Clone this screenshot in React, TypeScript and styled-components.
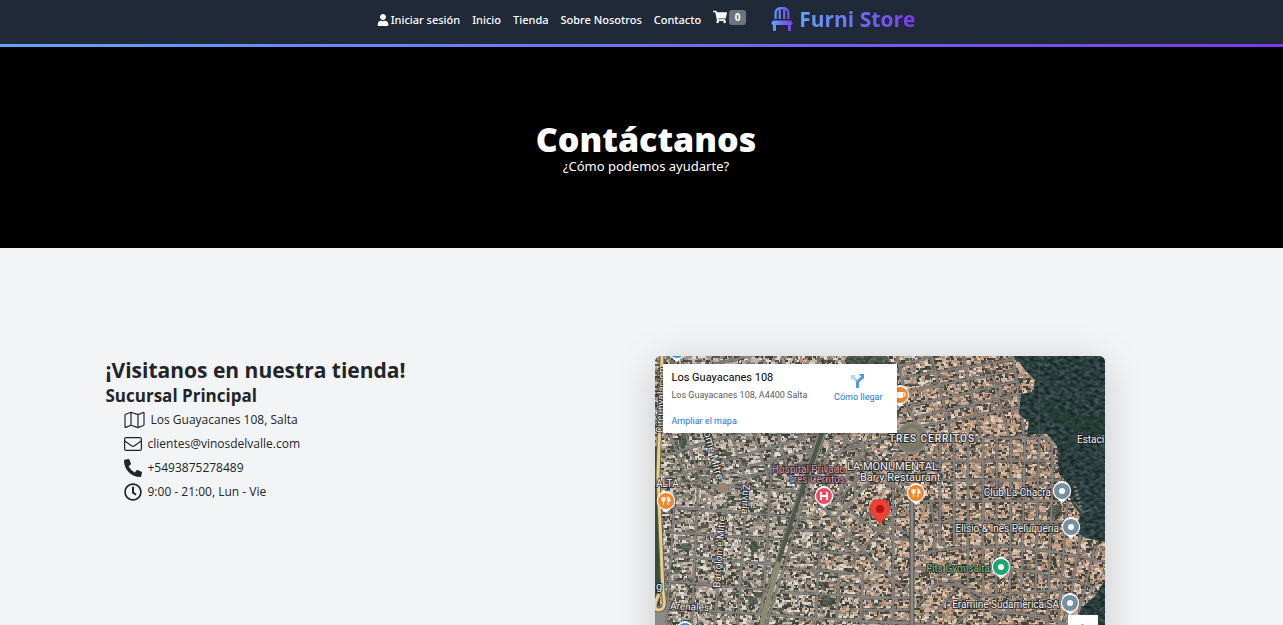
import React from "react";
import styled, { createGlobalStyle, css } from "styled-components";
import { FaUser, FaShoppingCart, FaChair, FaPhoneAlt, FaRegClock } from "react-icons/fa";

const GlobalStyle = createGlobalStyle`
  *, *::before, *::after { box-sizing: border-box; }
  body {
    margin: 0;
    background: #f3f4f6;
    color: #212529;
    font-family: "Open Sans", "Noto Sans", sans-serif;
    font-size: 12px;
    line-height: 20px;
  }
  h1, h2, h3, p, ul { margin: 0; padding: 0; }
  ul { list-style: none; }
  a { color: inherit; text-decoration: none; }
`;

const Page = styled.div`
  min-height: 100vh;
  overflow: hidden;
`;

const Header = styled.header`
  background: #1f2937;
  &::after {
    content: "";
    display: block;
    height: 3px;
    background: linear-gradient(90deg, #60a5fa, #7c3aed);
  }
`;

const Nav = styled.nav`
  display: flex;
  justify-content: center;
  align-items: center;
  height: 44px;
  padding: 0 0 6px 9px;
  color: #fff;
`;

const NavList = styled.ul`
  display: flex;
  align-items: center;
  gap: 12px;
`;

const NavLink = styled.a`
  display: flex;
  align-items: center;
  gap: 2px;
  padding-top: 2px;
  font-family: "Noto Sans", sans-serif;
  font-size: 11px;
  font-weight: 500;
  white-space: nowrap;
`;

const CartLink = styled(NavLink)`
  padding: 0 0 4px;
`;

const CartBadge = styled.span`
  min-width: 17px;
  height: 15px;
  border-radius: 3px;
  background: #6c757d;
  font-size: 10px;
  font-weight: 700;
  line-height: 15px;
  text-align: center;
`;

const Brand = styled.a`
  display: flex;
  align-items: center;
  gap: 5px;
  margin-left: 24px;
  font-size: 21px;
  font-weight: 700;
  line-height: 30px;
  white-space: nowrap;
  svg path { fill: url(#brandGradient); }
`;

const BrandName = styled.span`
  background: linear-gradient(90deg, #60a5fa, #7c3aed);
  background-clip: text;
  -webkit-background-clip: text;
  color: transparent;
`;

const Defs = styled.svg`
  position: absolute;
  width: 0;
  height: 0;
`;

const Hero = styled.section`
  display: flex;
  flex-direction: column;
  align-items: center;
  justify-content: center;
  min-height: 201px;
  padding: 0 0 0 9px;
  background: #000;
  color: #fff;
`;

const HeroTitle = styled.h1`
  font-size: 34px;
  font-weight: 800;
  line-height: 36px;
`;

const HeroText = styled.p`
  font-family: "Noto Sans", sans-serif;
  font-size: 13px;
  line-height: 18px;
`;

const Contact = styled.main`
  display: grid;
  grid-template-columns: 1fr 1fr;
  gap: 26px;
  max-width: 1072px;
  margin: 0 auto;
  padding: 108px 0 100px;
`;

const StoreTitle = styled.h2`
  font-size: 21px;
  font-weight: 700;
  line-height: 28px;
`;

const BranchTitle = styled.h3`
  font-size: 17px;
  font-weight: 700;
  line-height: 24px;
`;

const ContactList = styled.ul`
  padding-left: 18px;
`;

const ContactItem = styled.li`
  display: flex;
  align-items: center;
  gap: 6px;
  height: 24px;
  font-size: 12px;
`;

const MapFrame = styled.section`
  position: relative;
  width: 450px;
  max-width: 100%;
  height: 320px;
  overflow: hidden;
  border-radius: 6px;
`;

const MapShadow = styled.div`
  justify-self: start;
  border-radius: 6px;
  box-shadow: 0 8px 40px rgba(0, 0, 0, 0.18);
`;

const InfoCard = styled.div`
  position: absolute;
  top: 8px;
  left: 8px;
  display: flex;
  justify-content: space-between;
  width: 234px;
  height: 69px;
  padding: 5px 14px 0 9px;
  background: #fff;
  box-shadow: 0 1px 3px rgba(0, 0, 0, 0.3);
  color: #5b5b5b;
  font-family: Roboto, sans-serif;
  font-size: 9px;
  line-height: 18px;
`;

const PlaceName = styled.div`
  color: #000;
  font-size: 11px;
  line-height: 17px;
`;

const MapLink = styled.a<{ $spaced?: boolean }>`
  display: block;
  color: #1a73e8;
  ${(p) => p.$spaced && css`margin-top: 8px;`}
`;

const Directions = styled(MapLink)`
  display: flex;
  flex-direction: column;
  align-items: center;
  padding-top: 4px;
  line-height: 16px;
  height: 36px;
`;

const ZoomControl = styled.button`
  position: absolute;
  top: 259px;
  right: 7px;
  width: 30px;
  height: 30px;
  padding: 0;
  border: 0;
  background: #fff;
  color: #666;
  font: 700 20px/30px Roboto, sans-serif;
`;

const MapLabel = styled.text<{ $size?: number; $tone?: string; $end?: boolean }>`
  font-family: Roboto, sans-serif;
  font-size: ${(p) => p.$size ?? 11}px;
  text-anchor: ${(p) => (p.$end ? "end" : "start")};
  fill: ${(p) => p.$tone ?? "#f1f1f1"};
  stroke: rgba(25, 25, 25, 0.75);
  stroke-width: 2px;
  stroke-linejoin: round;
  paint-order: stroke;
`;

const DistrictLabel = styled(MapLabel)`
  font-weight: 500;
  letter-spacing: 1px;
`;

/* Rooftops and yards: runs of small cells, one path for each colour. */
const W = 450;
const H = 320;
const COOL = ["#c4c0b6", "#545a4e", "#9a9388", "#ece8df", "#3c4339", "#b09b88", "#7b756c", "#cfc3b3"];
const WARM = ["#cfab8f", "#525046", "#a58b78", "#ead9c6", "#3b3d35", "#bd9375", "#80756a", "#d8bba0"];

function rooftops() {
  let seed = 90211;
  const rnd = () => {
    seed = (seed * 1664525 + 1013904223) >>> 0;
    return seed / 4294967296;
  };
  const layers: Record<string, string[]> = {};
  for (let y = 0; y < H; y += 2) {
    let x = 0;
    while (x < W) {
      const w = 1 + Math.floor(rnd() * 4);
      const warm = rnd() < (x - 130 + y * 0.1) / 200;
      const fill = (warm ? WARM : COOL)[Math.floor(rnd() * 8)];
      const h = rnd() < 0.3 ? 3 : 2;
      (layers[fill] ??= []).push(`M${x} ${y}h${w}v${h}h-${w}z`);
      x += w;
    }
  }
  return Object.entries(layers).map(([fill, d]) => ({ fill, d: d.join("") }));
}
const ROOFS = rooftops();

const STREETS = [
  // west grid
  "M20 136L12 262 10 320", "M43 132L37 262 34 320", "M70 146L60 262 57 320", "M93 120L83 262 80 320", "M118 90L107 262 104 320",
  "M8 125L146 136", "M10 151L144 161", "M10 176L134 184", "M10 199L126 209", "M10 225L117 234", "M8 252L320 272", "M8 280L108 286",
  // north-west grid
  "M10 99L86 77", "M10 122L165 77", "M40 125L162 92", "M80 124L158 105", "M10 66L32 124", "M28 70L46 126", "M52 74L70 124", "M75 74L90 122", "M98 74L114 124", "M122 74L134 120", "M146 74L154 100",
  "M10 20L180 -20", "M180 78L162 126", "M196 70L172 132", "M220 70L178 150", "M178 98L245 78", "M170 120L215 112",
  // avenue edges by the railway
  "M172 70L148 145 128 215 104 290", "M164 76L140 150 118 216 102 262",
  // curved centre
  "M150 132Q185 168 226 214L256 238", "M166 126Q205 170 240 182L257 184", "M182 72Q218 120 257 140",
  "M200 82Q224 110 250 118", "M160 150L176 150 206 120", "M176 166L222 118", "M190 182L222 150", "M198 202L236 166", "M222 210L240 190",
  "M138 174L168 174 205 202", "M134 192L196 198", "M130 212L208 218", "M126 236L234 242", "M166 174L160 272", "M184 216L180 290", "M208 216L204 290", "M144 150L142 172", "M200 100V140", "M146 162H166",
  // park and boulevard
  "M210 60L240 76", "M274 82L392 82Q398 84 397 96V126", "M268 96L284 112 262 118 246 130", "M244 96L225 114",
  // north-east grid
  "M242 0L252 50 262 70", "M277 0L296 80", "M308 0L326 80", "M336 15L354 80", "M358 0L369 80",
  "M245 10L275 1", "M246 22L360 3", "M248 36L362 14", "M255 50L364 25", "M262 61L364 38", "M269 70L365 51",
  // east grid
  "M262 105H400", "M262 124H404", "M255 145H412", "M277 166H420", "M262 198L300 192 350 190Q400 194 450 206", "M232 166L257 180",
  "M285 82V190", "M299 82V190", "M313 82V230", "M328 82V240", "M342 82L341 245", "M356 82L355 250", "M370 82L366 256", "M384 82L380 262", "M398 110L392 275",
  "M412 145L402 285", "M426 176L412 265", "M440 190L424 256", "M238 118V320", "M342 212Q400 216 440 232",
  // south-east
  "M262 212L280 214 326 240 400 234 428 246", "M262 250L282 228 302 228 340 256 390 260", "M270 270L304 228", "M290 280L326 244", "M300 300L352 256", "M350 254L420 270", "M334 270H420", "M240 216L256 216",
  "M206 242H256", "M206 254H256", "M206 266H256", "M276 145L280 182 278 198",
];

const FOREST = [
  "M360 0H450V186L430 182 422 176 425 158 416 146 414 128 404 118 402 90 392 78 372 78 374 66 364 58 366 38 378 36 380 24 370 14Z",
  "M450 224L440 240 426 252 418 290 410 320H450Z",
];

type PinProps = { x: number; y: number; color: string; children?: React.ReactNode };

const Pin = ({ x, y, color, children }: PinProps) => (
  <g transform={`translate(${x} ${y})`}>
    <path d="M0-10A10 10 0 0 1 7 6Q3 9 0 12Q-3 9-7 6A10 10 0 0 1 0-10Z" fill="#fff" />
    <circle r="8" fill={color} />
    {children ?? <circle r="3" fill="#fff" />}
  </g>
);

const Fork = () => (
  <g stroke="#fff" fill="none" strokeWidth="1.200">
    <path d="M-4-4V-1Q-4 0-2.500 0T-1-1V-4M-2.500-4V4" />
    <path d="M2 4V-4Q4-3 4 0H2" fill="#fff" />
  </g>
);

const SatelliteMap = () => (
  <svg width={W} height={H} viewBox={`0 0 ${W} ${H}`} role="img" aria-label="Mapa de Salta">
    <defs>
      <filter id="foliage" x="0" y="0" width="100%" height="100%">
        <feTurbulence type="fractalNoise" baseFrequency="0.2 0.28" numOctaves="3" seed="7" />
        <feColorMatrix values="0 0 0 0 0.14  0 0 0 0 0.22  0 0 0 0 0.19  1.1 0 0 0 -0.3" />
        <feComposite in2="SourceGraphic" operator="in" />
      </filter>
      <filter id="roofBlend"><feGaussianBlur stdDeviation="0.4" /></filter>
    </defs>
    <rect width={W} height={H} fill="#6f6b63" />
    <g filter="url(#roofBlend)" opacity="0.9">
      {ROOFS.map((r) => <path key={r.fill} d={r.d} fill={r.fill} />)}
    </g>
    <g fill="#36483a" opacity="0.75">
      <ellipse cx="28" cy="86" rx="4" ry="7" /><ellipse cx="31" cy="191" rx="6" ry="4" />
      <ellipse cx="99" cy="190" rx="4" ry="6" /><ellipse cx="98" cy="245" rx="5" ry="4" />
      <ellipse cx="172" cy="246" rx="6" ry="5" /><ellipse cx="22" cy="214" rx="4" ry="3" />
      <ellipse cx="212" cy="4" rx="22" ry="8" /><ellipse cx="400" cy="155" rx="7" ry="6" />
    </g>
    <g fill="none" strokeLinejoin="round">
      <path d={STREETS.join("")} stroke="#4a4a46" strokeWidth="3.500" opacity="0.5" />
      <path d={STREETS.join("")} stroke="#858481" strokeWidth="1.700" />
      <path d="M257 140V320" stroke="#504f4c" strokeWidth="5" />
      <path d="M257 140V320" stroke="#8d8b87" strokeWidth="3" />
      <path d="M168 74L149 128 122 210" stroke="#4d5a49" strokeWidth="4" />
      <path d="M124 206L110 256 104 280" stroke="#8a8c6d" strokeWidth="5" />
    </g>
    <circle cx="257" cy="82" r="15" fill="#7a7966" stroke="#8a8884" strokeWidth="2" />
    <circle cx="257" cy="80" r="8" fill="#998d76" opacity="0.7" />
    <circle cx="68" cy="132" r="5" fill="#9b8370" stroke="#8a8884" />
    {FOREST.map((d) => (
      <g key={d}>
        <path d={d} fill="#16272a" />
        <path d={d} fill="#16272a" filter="url(#foliage)" />
      </g>
    ))}
    <path d="M386 40Q410 66 450 58V80Q420 74 400 66Q388 56 386 40Z" fill="#1f3d2c" opacity="0.5" />
    <g fill="none" stroke="#697269" opacity="0.8">
      <path d="M384 0V78" strokeWidth="1" opacity="0.6" />
      <path d="M419 146L428 156 436 154" strokeWidth="2" />
      <path d="M394 82L400 90M420 130L426 154" stroke="#a29b8c" strokeWidth="3" strokeDasharray="2 2" />
      <path d="M450 214Q436 240 420 252T400 300" stroke="#85837f" strokeWidth="2" />
    </g>
    <path d="M0 90H4L5 250H0Z" fill="#314f3a" />
    <path d="M0 250H10V320H0Z" fill="#8b8b89" />
    <path d="M7 0L3 120 8 236Q12 254 4 254T4 238" fill="none" stroke="#6b6042" strokeWidth="5" />
    <path d="M7 0L3 120 8 236Q12 254 4 254T4 238" fill="none" stroke="#e5cf91" strokeWidth="3" />

    <MapLabel transform="translate(8 77) rotate(-88)" $size={10}>Circunvalación</MapLabel>
    <MapLabel transform="translate(41 48) rotate(75)">Bartolomé Mitre</MapLabel>
    <MapLabel transform="translate(65 232) rotate(-86)" $size={10}>Bartolomé Mitre</MapLabel>
    <MapLabel transform="translate(88 128) rotate(93)" $size={10}>Zuviría</MapLabel>
    <MapLabel x="1" y="131" $size={10}>ALTA</MapLabel>
    <MapLabel x="1" y="234">g</MapLabel>
    <MapLabel transform="translate(15 253) rotate(3)" $size={10}>Arenales</MapLabel>
    <MapLabel x="190" y="117" $tone="#dd94ab" $size={10} $end>Hospital Privado</MapLabel>
    <MapLabel x="190" y="127" $tone="#dd94ab" $size={10} $end>Tres Cerritos</MapLabel>
    <MapLabel x="192" y="114">LA MONUMENTAL.</MapLabel>
    <MapLabel x="205" y="125">Bar y Restaurant</MapLabel>
    <DistrictLabel x="234" y="86" $size={10}>TRES CERRITOS</DistrictLabel>
    <MapLabel x="422" y="87" $size={10}>Estaci</MapLabel>
    <MapLabel x="396" y="140" $size={10} $end>Club La Chacra</MapLabel>
    <MapLabel x="404" y="176" $size={10} $end>Elisio &amp; Ines Peluquería</MapLabel>
    <MapLabel x="335" y="216" $tone="#72c081" $size={10} $end>Fits Gym salta</MapLabel>
    <MapLabel x="404" y="252" $size={10} $end>Eramine Sudamerica SA</MapLabel>

    <Pin x={22} y={-6} color="#1a9be8" />
    <Pin x={30} y={275} color="#1a9be8" />
    <Pin x={11} y={145} color="#f5852b"><Fork /></Pin>
    <Pin x={261} y={137} color="#f5852b"><Fork /></Pin>
    <Pin x={245} y={39} color="#f5852b">
      <path d="M-4-3H3V2Q3 3 2 3H-3Q-4 3-4 2Z" fill="#fff" />
      <path d="M3-2H5V1H3" fill="none" stroke="#fff" />
    </Pin>
    <Pin x={169} y={140} color="#ee4c60">
      <path d="M-3-4V4M3-4V4M-3 0H3" stroke="#fff" strokeWidth="2" />
    </Pin>
    <Pin x={407} y={135} color="#75919f" />
    <Pin x={416} y={171} color="#75919f" />
    <Pin x={415} y={247} color="#75919f" />
    <Pin x={346} y={211} color="#1ba672" />
    <path d="M225 143C231 143 235 147 235 153C235 160 227 162 225 170C223 162 215 160 215 153C215 147 219 143 225 143Z" fill="#ea4335" stroke="#c5221f" strokeWidth="0.500" />
    <circle cx="225" cy="153" r="4" fill="#b31412" />
  </svg>
);

const DirectionsIcon = () => (
  <svg width="16" height="16" viewBox="0 0 16 16" fill="none" aria-hidden="true">
    <path d="M8 9L3.500 4.500" stroke="#b5d1f8" strokeWidth="3" />
    <path d="M1 7V2H6Z" fill="#b5d1f8" />
    <path d="M7.500 15V9L12 4.500" stroke="#5296e8" strokeWidth="3" />
    <path d="M8.500 1H14V6.500Z" fill="#5296e8" />
  </svg>
);

const FoldedMapIcon = () => (
  <svg width="21" height="18" viewBox="0 0 21 18" fill="none" stroke="currentColor" strokeWidth="1.200" strokeLinejoin="round" aria-hidden="true">
    <path d="M1 4.200Q1 3.500 1.700 3.200L7 1.200 14 3.600 19.300 1.500Q20 1.300 20 2V13.600Q20 14.200 19.400 14.500L14 16.600 7 14.200 1.700 16.400Q1 16.600 1 16ZM7 1.200V14.200M14 3.600V16.600" />
  </svg>
);

const EnvelopeIcon = () => (
  <svg width="18" height="18" viewBox="0 0 18 18" fill="none" stroke="currentColor" strokeWidth="1.200" strokeLinejoin="round" aria-hidden="true">
    <rect x="0.600" y="2.600" width="16.800" height="12.800" rx="1.600" />
    <path d="M0.800 6L7.500 10.800Q9 11.800 10.500 10.800L17.200 6" />
  </svg>
);

const LINKS = ["Inicio", "Tienda", "Sobre Nosotros", "Contacto"];

const CONTACTS = [
  { icon: <FoldedMapIcon />, text: "Los Guayacanes 108, Salta" },
  { icon: <EnvelopeIcon />, text: "clientes@vinosdelvalle.com" },
  { icon: <FaPhoneAlt size={18} />, text: "+5493875278489" },
  { icon: <FaRegClock size={18} />, text: "9:00 - 21:00, Lun - Vie" },
];

export default function App() {
  return (
    <Page>
      <GlobalStyle />
      <Defs aria-hidden="true">
        <linearGradient id="brandGradient" x1="0" y1="0" x2="1" y2="0">
          <stop stopColor="#60a5fa" />
          <stop offset="1" stopColor="#7c3aed" />
        </linearGradient>
      </Defs>
      <Header>
        <Nav>
          <NavList>
            <li><NavLink href="#login"><FaUser size={12} />Iniciar sesión</NavLink></li>
            {LINKS.map((label) => (
              <li key={label}><NavLink href="#">{label}</NavLink></li>
            ))}
            <li>
              <CartLink href="#cart" aria-label="Carrito">
                <FaShoppingCart size={14} />
                <CartBadge>0</CartBadge>
              </CartLink>
            </li>
          </NavList>
          <Brand href="#"><FaChair size={24} /><BrandName>Furni Store</BrandName></Brand>
        </Nav>
      </Header>
      <Hero>
        <HeroTitle>Contáctanos</HeroTitle>
        <HeroText>¿Cómo podemos ayudarte?</HeroText>
      </Hero>
      <Contact>
        <section>
          <StoreTitle>¡Visitanos en nuestra tienda!</StoreTitle>
          <BranchTitle>Sucursal Principal</BranchTitle>
          <ContactList>
            {CONTACTS.map((c) => (
              <ContactItem key={c.text}>{c.icon}<span>{c.text}</span></ContactItem>
            ))}
          </ContactList>
        </section>
        <MapShadow>
          <MapFrame>
            <SatelliteMap />
            <InfoCard>
              <div>
                <PlaceName>Los Guayacanes 108</PlaceName>
                <div>Los Guayacanes 108, A4400 Salta</div>
                <MapLink href="#map" $spaced>Ampliar el mapa</MapLink>
              </div>
              <Directions href="#directions"><DirectionsIcon />Cómo llegar</Directions>
            </InfoCard>
            <ZoomControl aria-label="Acercar">+</ZoomControl>
          </MapFrame>
        </MapShadow>
      </Contact>
    </Page>
  );
}
